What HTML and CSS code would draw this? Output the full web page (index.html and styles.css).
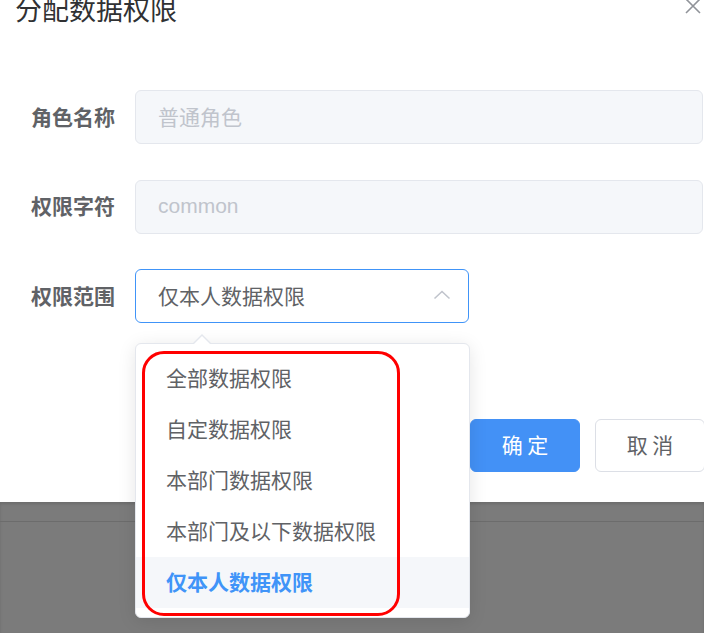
FILE: index.html
```html
<!DOCTYPE html>
<html lang="zh-CN">
<head>
<meta charset="utf-8">
<title>分配数据权限</title>
<link rel="stylesheet" href="styles.css">
</head>
<body>
  <div class="dialog">
    <div class="dialog-header">
      <span class="dialog-title">分配数据权限</span>
      <button class="dialog-close" aria-label="关闭">
        <svg width="16" height="16" viewBox="0 0 16 16"><path d="M1 1 L15 15 M15 1 L1 15" stroke="#909399" stroke-width="1.6" fill="none"/></svg>
      </button>
    </div>
    <form class="form">
      <div class="form-item">
        <label class="form-label">角色名称</label>
        <div class="input is-disabled">普通角色</div>
      </div>
      <div class="form-item">
        <label class="form-label">权限字符</label>
        <div class="input is-disabled latin">common</div>
      </div>
      <div class="form-item">
        <label class="form-label">权限范围</label>
        <div class="select is-focus">
          <span class="select-value">仅本人数据权限</span>
          <svg class="select-arrow" width="18" height="10" viewBox="0 0 18 10"><path d="M1.5 8.5 L9 1.5 L16.5 8.5" stroke="#c0c4cc" stroke-width="1.6" fill="none"/></svg>
        </div>
      </div>
    </form>
    <div class="dialog-footer">
      <button class="btn btn-primary">确 定</button>
      <button class="btn">取 消</button>
    </div>
  </div>
  <div class="backdrop">
    <div class="backdrop-line"></div>
  </div>

  <div class="dropdown">
    <span class="popper-arrow"></span>
    <ul class="dropdown-list">
      <li class="dropdown-item">全部数据权限</li>
      <li class="dropdown-item">自定数据权限</li>
      <li class="dropdown-item">本部门数据权限</li>
      <li class="dropdown-item">本部门及以下数据权限</li>
      <li class="dropdown-item selected">仅本人数据权限</li>
    </ul>
  </div>
  <div class="annotation"></div>
</body>
</html>
```
FILE: styles.css
```css
* { box-sizing: border-box; }
html, body {
  margin: 0;
  padding: 0;
  width: 704px;
  height: 633px;
  overflow: hidden;
  background: #7b7b7b;
  font-family: "Liberation Sans", "Noto Sans CJK SC", sans-serif;
}
.dialog {
  background: #fff;
  height: 502px;
  position: relative;
  overflow: hidden;
}
.dialog-header {
  height: 22px;
  padding-left: 15px;
  display: flex;
  align-items: flex-start;
}
.dialog-title {
  font-family: "Noto Sans CJK SC", sans-serif;
  font-size: 27px;
  line-height: 27px;
  margin-top: -5px;
  color: #303133;
}
.dialog-close {
  position: absolute;
  right: 3px;
  top: -2px;
  border: 0;
  padding: 0;
  background: none;
  width: 16px;
  height: 16px;
}
.dialog-close svg { display: block; }
.form {
  margin: 0;
  padding-top: 68px;
  padding-bottom: 1px;
}
.form-item {
  display: flex;
  align-items: center;
  height: 54px;
  margin-bottom: 35.5px;
}
.form-item:last-child { margin-bottom: 0; }
.form-label {
  width: 135px;
  padding-right: 20px;
  padding-bottom: 3px;
  text-align: right;
  font-family: "Noto Sans CJK SC", sans-serif;
  font-weight: 700;
  font-size: 21px;
  color: #606266;
}
.input {
  flex: 1;
  margin-right: 1px;
  height: 54px;
  border: 1px solid #e4e7ed;
  border-radius: 6px;
  padding-left: 22px;
  padding-bottom: 3px;
  display: flex;
  align-items: center;
  font-family: "Noto Sans CJK SC", sans-serif;
  font-size: 21px;
}
.input.is-disabled {
  background: #f5f7fa;
  color: #c0c4cc;
}
.input.latin { font-family: "Liberation Sans", sans-serif; padding-bottom: 1px; }
.select {
  width: 334px;
  height: 54px;
  border: 1px solid #4094f8;
  border-radius: 6px;
  padding: 0 17px 3px 22px;
  display: flex;
  align-items: center;
  justify-content: space-between;
  font-family: "Noto Sans CJK SC", sans-serif;
  font-size: 21px;
  color: #606266;
}
.select-arrow { display: block; margin-top: 0; }
.dialog-footer {
  display: flex;
  justify-content: flex-end;
  gap: 15px;
  margin-right: -1px;
  margin-top: 95px;
}
.btn {
  width: 110px;
  height: 53px;
  border: 1px solid #dcdfe6;
  border-radius: 6px;
  background: #fff;
  color: #606266;
  font-family: "Noto Sans CJK SC", sans-serif;
  font-size: 21px;
  padding: 0 0 3px;
}
.btn-primary {
  background: #4391f6;
  border-color: #4391f6;
  color: #fff;
}
.backdrop {
  height: 131px;
  padding-top: 19px;
  box-shadow: inset 0 2px 3px rgba(0,0,0,.12);
}
.backdrop-line {
  height: 1px;
  background: #6c6c6c;
}
.dropdown {
  position: absolute;
  left: 135px;
  top: 343px;
  width: 335px;
  background: #fff;
  border: 1px solid #e4e7ed;
  border-radius: 6px;
  box-shadow: 0 3px 18px 0 rgba(0,0,0,.1);
}
.popper-arrow {
  position: absolute;
  left: 57px;
  top: -10px;
  width: 0;
  height: 0;
  border-left: 9px solid transparent;
  border-right: 9px solid transparent;
  border-bottom: 9px solid #e4e7ed;
}
.popper-arrow::after {
  content: "";
  position: absolute;
  left: -8px;
  top: 1.5px;
  border-left: 8px solid transparent;
  border-right: 8px solid transparent;
  border-bottom: 8px solid #fff;
}
.dropdown-list {
  list-style: none;
  margin: 0;
  padding: 9px 0;
}
.dropdown-item {
  height: 51px;
  line-height: 48px;
  padding-left: 30px;
  font-family: "Noto Sans CJK SC", sans-serif;
  font-size: 21px;
  color: #606266;
}
.dropdown-item.selected {
  background: #f5f7fa;
  color: #4094f8;
  font-weight: 700;
}
.annotation {
  position: absolute;
  left: 142px;
  top: 351px;
  width: 258px;
  height: 265px;
  border: 3px solid #ff0000;
  border-radius: 22px;
  pointer-events: none;
}
```
